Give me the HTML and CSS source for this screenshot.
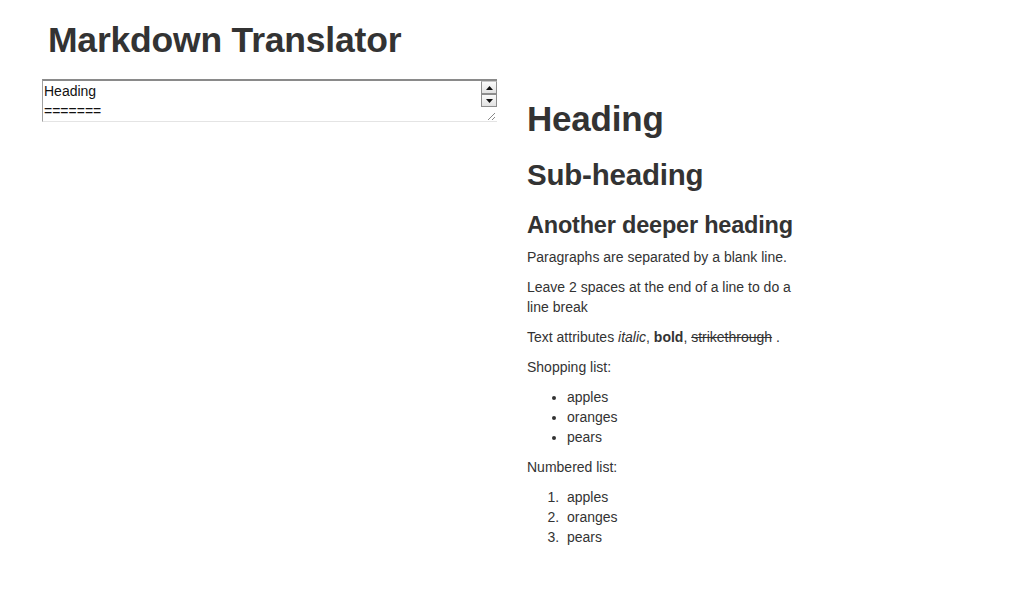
FILE: index.html
```html
<!DOCTYPE html>
<html>
<head>
<meta charset="utf-8">
<link rel="stylesheet" href="styles.css">
<title>Markdown Translator</title>
</head>
<body>
<div class="container">
  <div class="title-row"><h1 class="title">Markdown Translator</h1></div>
  <div class="row">
    <div class="col-left">
      <div class="editor">
        <div class="editor-text">Heading<br>=======</div>
        <div class="scrollbar">
          <div class="sb-btn"><svg width="7" height="4" viewBox="0 0 7 4"><path d="M3.5 0L7 4H0Z" fill="#111"/></svg></div>
          <div class="sb-btn"><svg width="7" height="4" viewBox="0 0 7 4"><path d="M0 0H7L3.5 4Z" fill="#111"/></svg></div>
          <div class="sb-rest"><svg class="grip" width="8" height="8" viewBox="0 0 8 8"><path d="M1 8L8 1M5 8L8 5" stroke="#888" stroke-width="1"/></svg></div>
        </div>
      </div>
    </div>
    <div class="col-right">
      <h1>Heading</h1>
      <h2>Sub-heading</h2>
      <h3>Another deeper heading</h3>
      <p>Paragraphs are separated by a blank line.</p>
      <p>Leave 2 spaces at the end of a line to do a<br>line break</p>
      <p>Text attributes <em>italic</em>, <strong>bold</strong>, <del>strikethrough</del> .</p>
      <p>Shopping list:</p>
      <ul>
        <li>apples</li>
        <li>oranges</li>
        <li>pears</li>
      </ul>
      <p>Numbered list:</p>
      <ol>
        <li>apples</li>
        <li>oranges</li>
        <li>pears</li>
      </ol>
    </div>
  </div>
</div>
</body>
</html>
```

FILE: styles.css
```css
html, body {
  margin: 0;
  padding: 0;
  background: #fff;
}
body {
  font-family: "Liberation Sans", Arial, sans-serif;
  font-size: 14px;
  line-height: 20px;
  color: #333;
}
.container {
  width: 940px;
  margin: 0 auto;
}
.title-row {
  padding: 0 6px;
}
.title {
  margin: 20px 0 19px;
  font-size: 35.5px;
  line-height: 40px;
  font-weight: bold;
  letter-spacing: -0.2px;
}
.row {
  display: flex;
  gap: 25px;
}
.col-left {
  width: 460px;
}
.col-right {
  width: 272px;
  padding-top: 10px;
}
.editor {
  display: flex;
  width: 455px;
  height: 43px;
  box-sizing: border-box;
  border-top: 2px solid #8a8a8a;
  border-left: 1px solid #a0a0a0;
  border-bottom: 1px solid #e4e4e4;
  border-right: 0;
  background: #fff;
  overflow: hidden;
}
.editor-text {
  flex: 1;
  padding: 0 1px;
  line-height: 20px;
  color: #111;
  font-size: 14px;
}
.scrollbar {
  width: 16px;
  display: flex;
  flex-direction: column;
}
.sb-btn {
  height: 13px;
  box-sizing: border-box;
  background: linear-gradient(#fafafa, #e2e2e2);
  border: 1px solid #8d8d8d;
  border-top-color: #c8c8c8;
  display: flex;
  align-items: center;
  justify-content: center;
}
.sb-btn + .sb-btn {
  border-top-color: #8d8d8d;
}
.sb-rest {
  flex: 1;
  display: flex;
  align-items: flex-end;
  justify-content: flex-end;
}
.grip {
  margin: 0 2px 1px 0;
}
.col-right h1,
.col-right h2,
.col-right h3 {
  font-weight: bold;
  margin: 10px 0;
  line-height: 40px;
  letter-spacing: -0.2px;
}
.col-right h1 {
  font-size: 35px;
  margin-bottom: 16px;
}
.col-right h2 {
  font-size: 29.5px;
}
.col-right h3 {
  font-size: 23.5px;
  margin-bottom: 2px;
}
.col-right p {
  margin: 0 0 10px;
}
.col-right ul,
.col-right ol {
  margin: 0 0 10px 25px;
  padding: 0 0 0 15px;
}
.col-right ol li::marker {
  content: counter(list-item) ".\00a0\00a0";
}
del {
  text-decoration: line-through;
}
```
